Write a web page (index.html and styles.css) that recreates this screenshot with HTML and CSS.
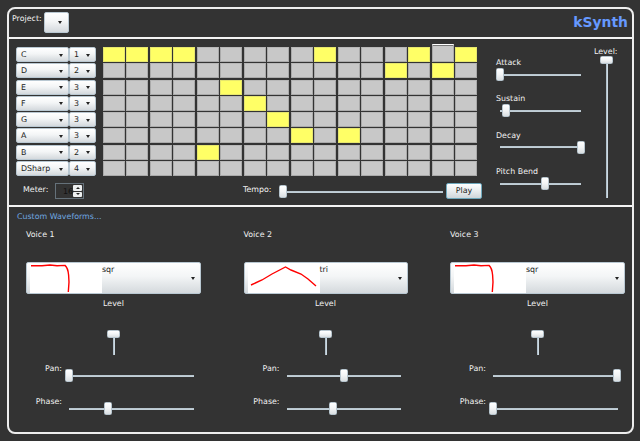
FILE: index.html
```html
<!DOCTYPE html>
<html lang="en">
<head>
<meta charset="utf-8">
<title>kSynth</title>
<link rel="stylesheet" href="styles.css">
</head>
<body>
<main class="frame">
  <header class="header">
    <span class="label">Project:</span>
    <div class="combo combo-project"><i class="arrow"></i></div>
    <h1 class="brand">kSynth</h1>
  </header>

  <section class="sequencer">
    <div class="board">
      <div class="pattern">
        <div class="notes" id="notes"></div>
        <div class="cells" id="cells"></div>
      </div>
      <div class="transport">
        <span class="label meter-label">Meter:</span>
        <div class="spinner">
          <span class="spinner-value">16</span>
          <div class="spinner-buttons"><b><i class="arrow up"></i></b><b><i class="arrow"></i></b></div>
        </div>
        <span class="label tempo-label">Tempo:</span>
        <div class="slider tempo"><i class="thumb" style="left:0%"></i></div>
        <button class="play">Play</button>
      </div>
    </div>
    <div class="envelope">
      <div class="control"><span class="label">Attack</span><div class="slider"><i class="thumb" style="left:0%"></i></div></div>
      <div class="control"><span class="label">Sustain</span><div class="slider"><i class="thumb" style="left:8%"></i></div></div>
      <div class="control"><span class="label">Decay</span><div class="slider"><i class="thumb" style="left:99.4%"></i></div></div>
      <div class="control"><span class="label">Pitch Bend</span><div class="slider"><i class="thumb" style="left:55%"></i></div></div>
    </div>
    <div class="master">
      <span class="label">Level:</span>
      <div class="vslider master-slider"><i class="vthumb"></i></div>
    </div>
  </section>

  <section class="waveforms">
    <h2 class="label link">Custom Waveforms...</h2>
    <div class="voices">
      <article class="voice">
        <h3 class="label">Voice 1</h3>
        <div class="combo combo-wave">
          <svg class="wave" viewBox="0 0 72 30"><path d="M1 2.7L12 2.7L20 2L27 2.7L35 2.4Q38 5 38.6 12L39 19L38.3 29"/></svg>
          <span>sqr</span><i class="arrow"></i>
        </div>
        <span class="label level-label">Level</span>
        <div class="vslider voice-level"><i class="vthumb"></i></div>
        <div class="row"><span class="label">Pan:</span><div class="slider"><i class="thumb" style="left:0%"></i></div></div>
        <div class="row"><span class="label">Phase:</span><div class="slider"><i class="thumb" style="left:31%"></i></div></div>
      </article>
      <article class="voice">
        <h3 class="label">Voice 2</h3>
        <div class="combo combo-wave">
          <svg class="wave" viewBox="0 0 72 30"><path d="M3 22L14 17L24 11L37.5 4L43 7L53 11L60 16L68 23"/></svg>
          <span>tri</span><i class="arrow"></i>
        </div>
        <span class="label level-label">Level</span>
        <div class="vslider voice-level"><i class="vthumb"></i></div>
        <div class="row"><span class="label">Pan:</span><div class="slider"><i class="thumb" style="left:50%"></i></div></div>
        <div class="row"><span class="label">Phase:</span><div class="slider"><i class="thumb" style="left:41%"></i></div></div>
      </article>
      <article class="voice">
        <h3 class="label">Voice 3</h3>
        <div class="combo combo-wave">
          <svg class="wave" viewBox="0 0 72 30"><path d="M1 2.7L12 2.7L20 2L27 2.7L35 2.4Q38 5 38.6 12L39 19L38.3 29"/></svg>
          <span>sqr</span><i class="arrow"></i>
        </div>
        <span class="label level-label">Level</span>
        <div class="vslider voice-level"><i class="vthumb"></i></div>
        <div class="row"><span class="label">Pan:</span><div class="slider"><i class="thumb" style="left:99.5%"></i></div></div>
        <div class="row"><span class="label">Phase:</span><div class="slider"><i class="thumb" style="left:0%"></i></div></div>
      </article>
    </div>
  </section>
</main>
<script src="app.js"></script>
</body>
</html>
```
FILE: styles.css
```css
* { box-sizing: border-box; }
body {
  margin: 0;
  width: 640px;
  height: 441px;
  overflow: hidden;
  background: #333;
  color: #f2f2f2;
  font: 7.9px/10px "DejaVu Sans", Verdana, sans-serif;
}
h1, h2, h3 { margin: 0; font: inherit; }
.label { display: block; white-space: nowrap; }

.frame {
  width: 627px;
  height: 427px;
  margin: 7px 0 0 7px;
  border: 2px solid #ededed;
  border-radius: 8px;
}

.header {
  display: flex;
  height: 30px;
  padding: 3px 4px 0 3px;
  border-bottom: 2px solid #f4f4f4;
}
.header .label { width: 32px; padding-top: 2px; }
.brand {
  margin-left: auto;
  padding-top: 1px;
  color: #69f;
  font-size: 13.9px;
  font-weight: bold;
  line-height: 18px;
}

.combo {
  display: flex;
  align-items: center;
  border: 1px solid #b9c8d2;
  border-radius: 2px;
  background: linear-gradient(#fff, #f3f5f6 45%, #d4d9dd);
  color: #222;
}
.arrow {
  width: 0;
  height: 0;
  border: 2.5px solid transparent;
  border-top: 3px solid #222;
  border-bottom: 0;
}
.arrow.up { border-top: 0; border-bottom: 3px solid #222; }
.combo .arrow { margin-left: auto; }
.combo-project { width: 25px; height: 21px; padding-right: 6px; }

.sequencer {
  display: flex;
  height: 168px;
  padding: 8px 0 0 7px;
  border-bottom: 2px solid #f4f4f4;
}
.board { width: 466px; }
.pattern { display: flex; }
.notes {
  display: grid;
  grid-template-columns: 53px 27px;
  grid-auto-rows: 15px;
  gap: 1.3px 0;
  width: 87px;
}
.notes .combo { padding: 1px 5px 0 4px; }
.cells {
  display: grid;
  grid-template-columns: repeat(16, 22px);
  grid-auto-rows: 15px;
  gap: 1.3px 1.47px;
}
.cell { background: #c8c8c8; border: 1px solid #aaa; border-top-color: #b8b8b8; }
.cell.on { background: #ff6; border-color: #e6e66d; }
.cell.hover { margin-top: -3px; border-top: 1px solid #fff; box-shadow: inset 0 1px #777; }

.transport { display: flex; height: 16px; margin-top: 7px; padding-left: 7px; }
.transport .label { padding-top: 2px; }
.meter-label { width: 32px; }
.spinner {
  display: flex;
  width: 29px;
  height: 16px;
  padding: 1px;
  border: 1px solid #65717a;
  color: #111;
}
.spinner-value { flex: 1; padding: 2px 0 0; text-align: right; }
.spinner-buttons { display: grid; width: 9px; gap: 1px; }
.spinner-buttons b {
  display: flex;
  align-items: center;
  justify-content: center;
  border-radius: 1px;
  background: #eef0f1;
}
.spinner-buttons .arrow { border-width: 2px; }
.spinner-buttons .arrow.up { border-top: 0; }
.spinner-buttons .arrow:not(.up) { border-bottom: 0; }
.tempo-label { margin-left: 159px; width: 40px; }
.tempo { width: 160px; margin-top: 2px; }
.play {
  width: 36px;
  height: 16px;
  margin-left: 3px;
  padding: 0;
  border: 1px solid #6fa9bd;
  border-radius: 2px;
  background: linear-gradient(#fff, #e9edef 50%, #cfd6da);
  color: #222;
  font: inherit;
}

.slider {
  position: relative;
  height: 13px;
  background: linear-gradient(#8fa0ac, #e3edf3 50%, #9fb0bb) center / 100% 2px no-repeat;
}
.thumb, .vthumb {
  position: absolute;
  border: 1px solid #b7c5ce;
  border-radius: 1.5px;
  background: linear-gradient(#fff, #f2f4f5 50%, #dadfe2);
}
.thumb { top: 0; width: 8px; height: 13px; margin-left: -4px; }
.vslider {
  position: relative;
  width: 13px;
  background: linear-gradient(90deg, #a4b4c0, #d9e6ee) center / 2px 100% no-repeat;
}
.vthumb { top: 0; left: 0; width: 13px; height: 8px; }

.envelope {
  display: grid;
  grid-auto-rows: 36.4px;
  align-content: start;
  width: 94px;
  padding: 11px 0 0 14px;
}
.envelope .slider { width: 81px; margin: 0 0 0 4px; }
.master { display: flex; flex-direction: column; padding-left: 18px; }
.master-slider { height: 142px; margin: -1px 0 0 6px; }

.waveforms { padding: 5px 0 0 8px; }
.link { color: #70a8e0; }
.voices {
  display: grid;
  grid-template-columns: 175px 164px 175px;
  column-gap: 42.5px;
  padding: 8px 0 0 9px;
}
.voice { display: flex; flex-direction: column; }
.combo-wave {
  height: 32px;
  margin-top: 22px;
  padding: 0 5px 0 3px;
}
.combo-wave span { align-self: flex-start; padding-top: 2px; }
.wave { width: 72px; height: 30px; background: #fff; }
.wave path { fill: none; stroke: #f00; stroke-width: 1.4; }
.level-label { margin-top: 5px; text-align: center; }
.voice-level { align-self: center; height: 25px; margin: 21px 0 7px; }
.row {
  display: grid;
  grid-template-columns: 36px 1fr;
  column-gap: 7px;
  height: 33px;
  padding-right: 7px;
}
.row .label { padding-top: 2px; text-align: right; }
.row .slider { margin-top: 7px; }
```
FILE: app.js
```js
const rows = [
  { note: 'C', octave: 1, on: [0, 1, 2, 3, 9, 13, 15] },
  { note: 'D', octave: 2, on: [12, 14] },
  { note: 'E', octave: 3, on: [5] },
  { note: 'F', octave: 3, on: [6] },
  { note: 'G', octave: 3, on: [7] },
  { note: 'A', octave: 3, on: [8, 10] },
  { note: 'B', octave: 2, on: [4] },
  { note: 'DSharp', octave: 4, on: [] }
];
const combo = text => `<div class="combo"><span>${text}</span><i class="arrow"></i></div>`;
document.getElementById('notes').innerHTML =
  rows.map(r => combo(r.note) + combo(r.octave)).join('');
document.getElementById('cells').innerHTML =
  rows.map((r, y) => Array.from({ length: 16 }, (_, x) => {
    const state = r.on.includes(x) ? ' on' : (y === 0 && x === 14 ? ' hover' : '');
    return `<i class="cell${state}"></i>`;
  }).join('')).join('');
```
